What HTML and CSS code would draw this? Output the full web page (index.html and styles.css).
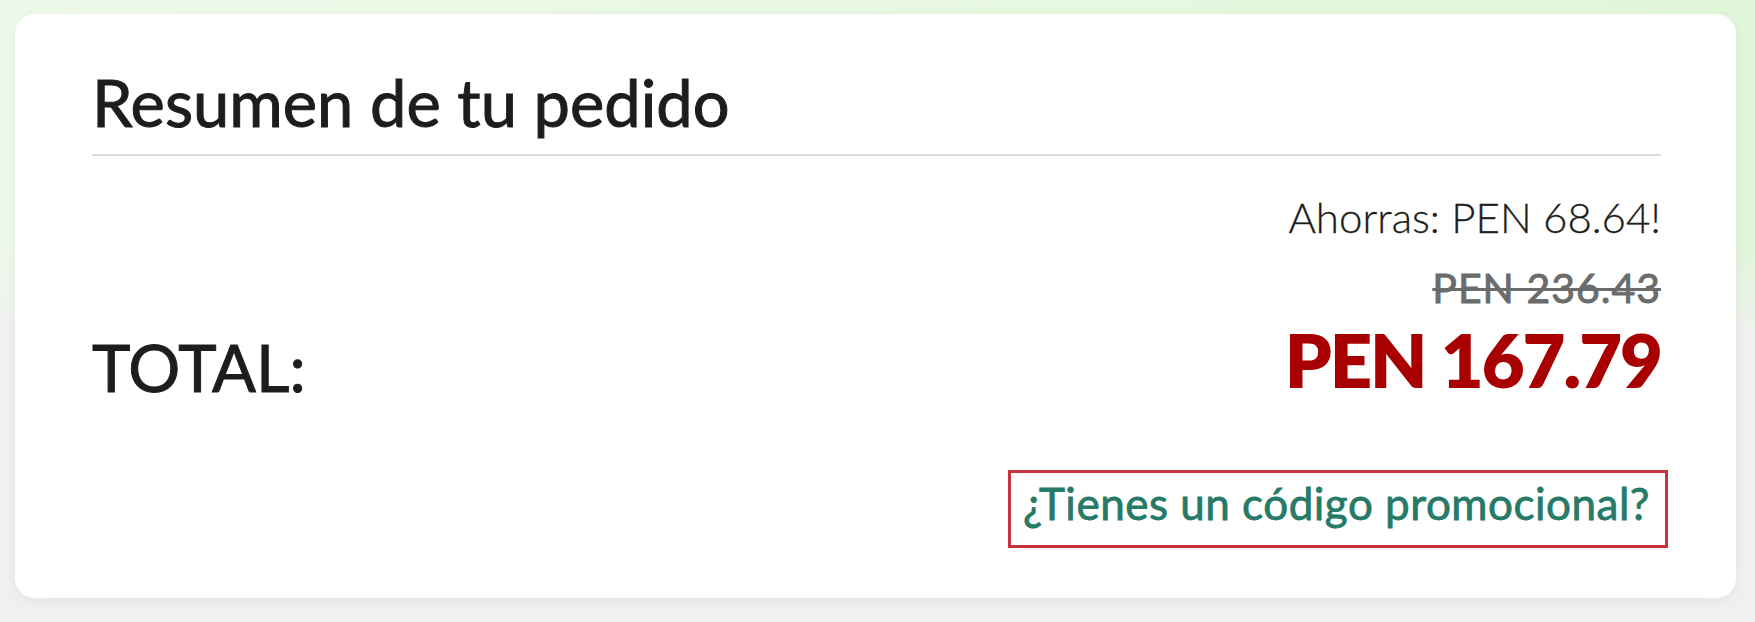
FILE: index.html
```html
<!DOCTYPE html>
<html lang="es">
<head>
<meta charset="utf-8">
<title>Resumen de tu pedido</title>
<link rel="stylesheet" href="styles.css">
</head>
<body>
<div class="page">
  <section class="summary">
    <h2 class="summary-title">Resumen de tu pedido</h2>
    <div class="total-row">
      <div class="total-label">TOTAL:</div>
      <div class="prices">
        <div class="savings">Ahorras: PEN 68.64!</div>
        <div class="old-price">PEN 236.43</div>
        <div class="new-price">PEN 167.79</div>
      </div>
    </div>
    <div class="promo-row">
      <a class="promo-link" href="#">¿Tienes un código promocional?</a>
    </div>
  </section>
</div>
</body>
</html>
```

FILE: styles.css
```css
html, body {
  margin: 0;
  padding: 0;
}

body {
  width: 1755px;
  height: 622px;
  overflow: hidden;
  font-family: "Lato", "Liberation Sans", sans-serif;
  color: #1d1d1b;
  background:
    linear-gradient(to bottom, rgba(240,240,240,0) 0%, rgba(240,240,240,0) 38%, #f0f0f0 55%, #f0f0f0 100%),
    linear-gradient(to right, #eef9ea 0%, #e8f8e2 50%, #e0f6d8 100%);
}

.page {
  padding: 14px 19px 25px 15px;
}

.summary {
  background: #ffffff;
  border-radius: 20px;
  box-shadow: 0 4px 14px rgba(0, 0, 0, 0.05);
  padding: 49px 75px 50px 77px;
}

.summary-title {
  margin: 0;
  font-size: 65px;
  line-height: 78px;
  font-weight: 400;
  -webkit-text-stroke: 1px #1d1d1b;
  padding-bottom: 13px;
  border-bottom: 2px solid #dcdcdc;
  color: #1d1d1b;
}

.total-row {
  display: flex;
  justify-content: space-between;
  align-items: flex-end;
}

.total-label {
  font-size: 65px;
  line-height: 78px;
  font-weight: 400;
  -webkit-text-stroke: 1px #1d1d1b;
  margin-bottom: -2px;
}

.prices {
  display: flex;
  flex-direction: column;
  align-items: flex-end;
  text-align: right;
}

.savings {
  margin-top: 36px;
  font-size: 42px;
  line-height: 50px;
  font-weight: 300;
  -webkit-text-stroke: 0.3px #1d1d1b;
  color: #1d1d1b;
}

.old-price {
  margin-top: 22px;
  font-size: 41px;
  line-height: 47px;
  font-weight: 400;
  letter-spacing: 1px;
  -webkit-text-stroke: 0.9px #6b6b6b;
  color: #6b6b6b;
  text-decoration: line-through;
  text-decoration-thickness: 3px;
}

.new-price {
  margin-top: 4px;
  font-size: 74px;
  line-height: 89px;
  font-weight: 800;
  color: #a80000;
  letter-spacing: -2px;
}

.promo-row {
  display: flex;
  justify-content: flex-end;
  margin-top: 66px;
  margin-right: -7px;
}

.promo-link {
  display: inline-block;
  border: 3px solid #c8323a;
  padding: 1px 15px 12px 12px;
  font-size: 44px;
  line-height: 59px;
  font-weight: 400;
  letter-spacing: 0.5px;
  -webkit-text-stroke: 0.8px #267a67;
  color: #267a67;
  text-decoration: none;
}
```
